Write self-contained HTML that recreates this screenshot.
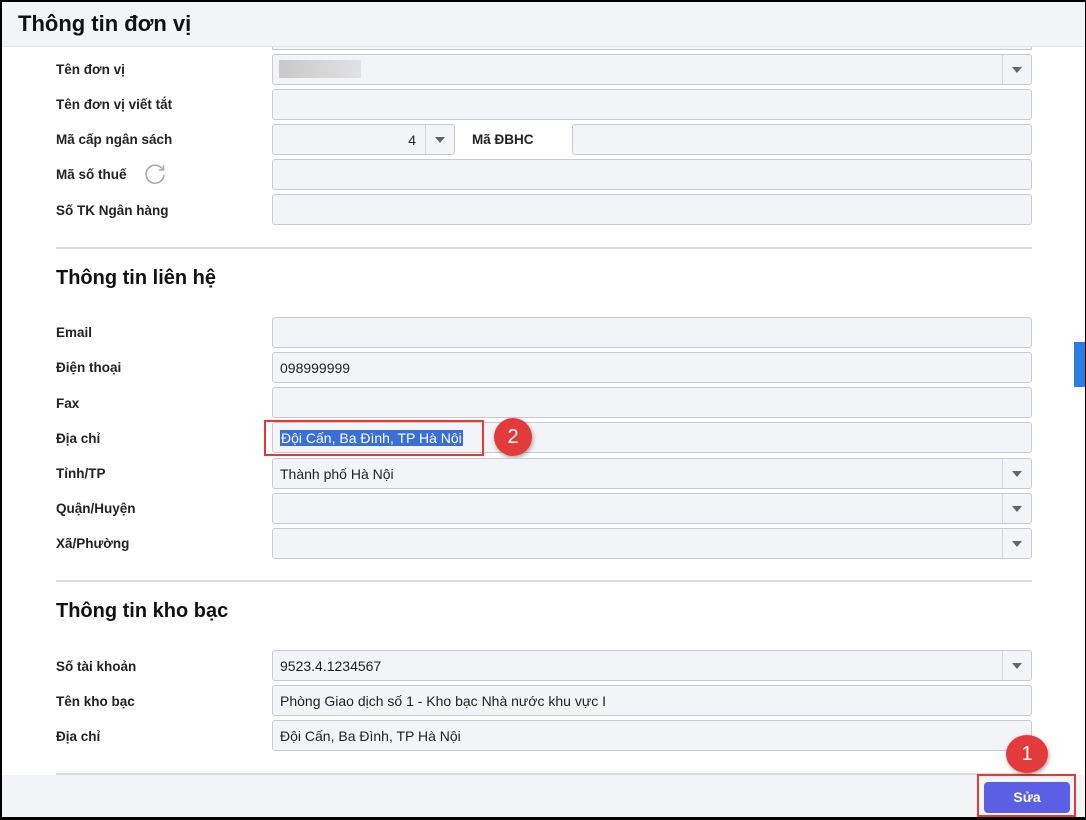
<!DOCTYPE html>
<html><head><meta charset="utf-8"><style>
*{box-sizing:border-box;margin:0;padding:0}
body{width:1086px;height:820px;overflow:hidden;background:#000;font-family:"Liberation Sans",sans-serif;color:#1a1a1a;position:relative}
.page{position:absolute;left:2px;top:2px;width:1083px;height:815px;background:#fff;overflow:hidden}
.hdr{position:absolute;left:0;top:0;width:100%;height:45px;background:#f3f4f6;border-bottom:1px solid #e3e4e8}
.hdr h1{position:absolute;left:16px;top:9px;font-size:22px;font-weight:bold;color:#111}
.lbl{position:absolute;left:54px;font-size:13.5px;font-weight:bold;color:#222}
.in{position:absolute;left:270px;width:760px;height:31px;background:#f3f4f7;border:1px solid #c9cad0;border-radius:3px;font-size:14px;padding:7px 0 0 7px;color:#222}
.dd::after{content:"";position:absolute;right:0;top:0;width:28px;height:29px;border-left:1px solid #d3d4d9}
.dd::before{content:"";position:absolute;right:9px;top:12px;border-left:5px solid transparent;border-right:5px solid transparent;border-top:6px solid #666}
.hr{position:absolute;left:54px;width:976px;height:2px;background:#dcdcdc}
.h2{position:absolute;left:54px;font-size:20px;font-weight:bold;color:#111}
.foot{position:absolute;left:0;top:773px;width:100%;height:42px;background:#f3f4f6}
</style></head><body><div class="page">
<div class="hdr"><h1>Thông tin đơn vị</h1></div>
<div style="position:absolute;left:270px;top:45px;width:760px;height:3px;border:1px solid #c9cad0;border-top:none;background:#f3f4f7"></div>

<div class="lbl" style="top:60px">Tên đơn vị</div>
<div class="in dd" style="top:52px"><div style="position:absolute;left:6px;top:5px;width:82px;height:18px;background:linear-gradient(90deg,#c8c8c8,#e2e2e4)"></div></div>
<div class="lbl" style="top:95px">Tên đơn vị viết tắt</div>
<div class="in" style="top:87px"></div>
<div class="lbl" style="top:130px">Mã cấp ngân sách</div>
<div class="in dd" style="top:122px;width:183px;text-align:right;padding-right:38px">4</div>
<div class="lbl" style="top:130px;left:470px">Mã ĐBHC</div>
<div class="in" style="top:122px;left:570px;width:460px"></div>
<div class="lbl" style="top:165px">Mã số thuế</div>
<svg style="position:absolute;left:140px;top:160px" width="26" height="26" viewBox="0 0 26 26"><path d="M21 8 A9 9 0 1 0 22 13" fill="none" stroke="#aaa" stroke-width="1.6"/><path d="M17 8 L21.5 8 L21.5 3.5" fill="none" stroke="#aaa" stroke-width="1.6"/></svg>
<div class="in" style="top:157px"></div>
<div class="lbl" style="top:201px">Số TK Ngân hàng</div>
<div class="in" style="top:192px"></div>

<div class="hr" style="top:245px"></div>
<div class="h2" style="top:265px">Thông tin liên hệ</div>

<div class="lbl" style="top:323px">Email</div>
<div class="in" style="top:315px"></div>
<div class="lbl" style="top:358px">Điện thoại</div>
<div class="in" style="top:350px">098999999</div>
<div class="lbl" style="top:394px">Fax</div>
<div class="in" style="top:385px"></div>
<div class="lbl" style="top:429px">Địa chỉ</div>
<div class="in" style="top:420px"><span style="background:#3a6fd8;color:#fff;padding:0 1px">Đội Cấn, Ba Đình, TP Hà Nội</span></div>
<div style="position:absolute;left:262px;top:418px;width:220px;height:36px;border:2px solid #e53935"></div>
<div style="position:absolute;left:492px;top:416px;width:38px;height:38px;border-radius:50%;background:#e53a3a;color:#fff;font-size:20px;text-align:center;line-height:38px;box-shadow:1px 2px 4px rgba(0,0,0,.35)">2</div>
<div class="lbl" style="top:464px">Tỉnh/TP</div>
<div class="in dd" style="top:456px">Thành phố Hà Nội</div>
<div class="lbl" style="top:499px">Quận/Huyện</div>
<div class="in dd" style="top:491px"></div>
<div class="lbl" style="top:534px">Xã/Phường</div>
<div class="in dd" style="top:526px"></div>

<div class="hr" style="top:578px"></div>
<div class="h2" style="top:598px">Thông tin kho bạc</div>

<div class="lbl" style="top:657px">Số tài khoản</div>
<div class="in dd" style="top:648px">9523.4.1234567</div>
<div class="lbl" style="top:692px">Tên kho bạc</div>
<div class="in" style="top:683px">Phòng Giao dịch số 1 - Kho bạc Nhà nước khu vực I</div>
<div class="lbl" style="top:727px">Địa chỉ</div>
<div class="in" style="top:718px">Đội Cấn, Ba Đình, TP Hà Nội</div>
<div class="hr" style="top:771px"></div>

<div class="foot"></div>
<div style="position:absolute;left:1072px;top:340px;width:12px;height:45px;background:#2a7de1"></div>
<div style="position:absolute;left:975px;top:772px;width:99px;height:43px;border:2px solid #e53935"></div>
<div style="position:absolute;left:982px;top:780px;width:86px;height:31px;background:#5b5fe6;border-radius:4px;color:#fff;font-weight:bold;font-size:14px;text-align:center;line-height:31px">Sửa</div>
<div style="position:absolute;left:1004px;top:733px;width:42px;height:38px;border-radius:50%;background:#e53a3a;color:#fff;font-size:20px;text-align:center;line-height:38px;box-shadow:1px 2px 4px rgba(0,0,0,.35)">1</div>
</div></body></html>
